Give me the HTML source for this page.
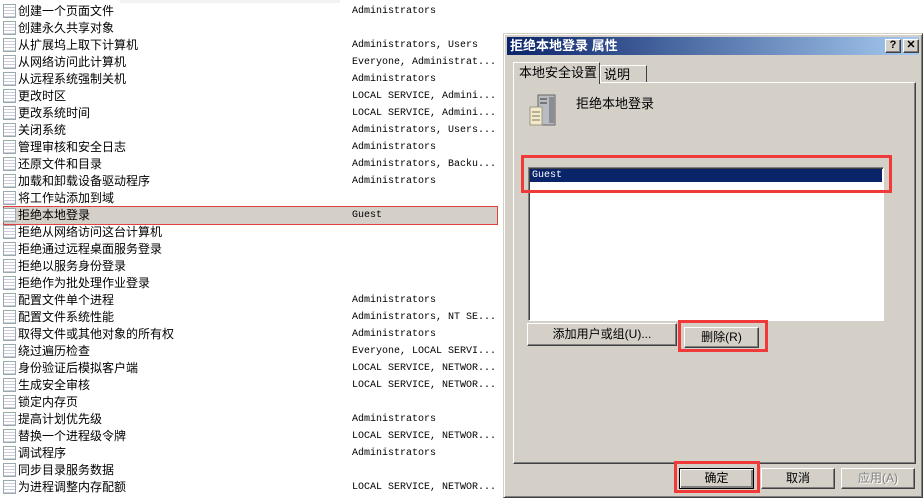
<!DOCTYPE html><html><head><meta charset="utf-8"><style>
*{margin:0;padding:0;box-sizing:border-box}
body{width:923px;height:498px;overflow:hidden;background:#fff;position:relative;font-family:"Liberation Sans","Noto Sans CJK SC",sans-serif;font-size:12px;color:#000}
.r{position:absolute;left:0;width:500px;height:17px;line-height:17px}
.r .i{position:absolute;left:3px;top:1px;width:13px;height:14px;border:1px solid #9aa;background:repeating-linear-gradient(#fff 0 2px,#ccd 2px 3px)}
.r .n{position:absolute;left:18px;top:0;white-space:nowrap}
.r .v{position:absolute;left:352px;top:0;font-family:"Liberation Mono",monospace;font-size:10px;white-space:nowrap}
.abs{position:absolute}
.btn{position:absolute;background:#d4d0c8;border:1px solid;border-color:#fff #404040 #404040 #fff;box-shadow:inset -1px -1px #808080;text-align:center;font-size:12px}
.red{position:absolute;border:3px solid #f03a3a}
</style></head><body>
<div class="abs" style="left:120px;top:0;width:220px;height:3px;background:#f2f2f2"></div>
<div id="list"></div>
<div class="abs" style="left:3px;top:206px;width:495px;height:19px;background:#d4d0c8;border:1px solid #e04040"></div>
<script>
var d=[["创建一个页面文件","Administrators"],["创建永久共享对象",""],["从扩展坞上取下计算机","Administrators, Users"],["从网络访问此计算机","Everyone, Administrat..."],["从远程系统强制关机","Administrators"],["更改时区","LOCAL SERVICE, Admini..."],["更改系统时间","LOCAL SERVICE, Admini..."],["关闭系统","Administrators, Users..."],["管理审核和安全日志","Administrators"],["还原文件和目录","Administrators, Backu..."],["加载和卸载设备驱动程序","Administrators"],["将工作站添加到域",""],["拒绝本地登录","Guest"],["拒绝从网络访问这台计算机",""],["拒绝通过远程桌面服务登录",""],["拒绝以服务身份登录",""],["拒绝作为批处理作业登录",""],["配置文件单个进程","Administrators"],["配置文件系统性能","Administrators, NT SE..."],["取得文件或其他对象的所有权","Administrators"],["绕过遍历检查","Everyone, LOCAL SERVI..."],["身份验证后模拟客户端","LOCAL SERVICE, NETWOR..."],["生成安全审核","LOCAL SERVICE, NETWOR..."],["锁定内存页",""],["提高计划优先级","Administrators"],["替换一个进程级令牌","LOCAL SERVICE, NETWOR..."],["调试程序","Administrators"],["同步目录服务数据",""],["为进程调整内存配额","LOCAL SERVICE, NETWOR..."]];
var h="";d.forEach(function(e,i){h+='<div class="r" style="top:'+(3+17*i)+'px;z-index:2"><span class="i"></span><span class="n">'+e[0]+'</span><span class="v">'+e[1]+'</span></div>'});
document.getElementById("list").innerHTML=h;
</script>
<div class="abs" style="left:503px;top:33px;width:420px;height:465px;background:#d4d0c8;border:1px solid;border-color:#d4d0c8 #404040 #404040 #d4d0c8;box-shadow:inset 1px 1px #fff,inset -1px -1px #808080;z-index:3">
<div class="abs" style="left:3px;top:3px;width:412px;height:18px;background:linear-gradient(90deg,#0a246a,#a6caf0);color:#fff;font-weight:bold;font-size:13px;line-height:18px;padding-left:3px">拒绝本地登录 属性</div>
<div class="btn" style="left:381px;top:5px;width:16px;height:14px;font-weight:bold;font-size:11px;line-height:11px">?</div>
<div class="btn" style="left:399px;top:5px;width:16px;height:14px;font-weight:bold;font-size:11px;line-height:11px">✕</div>
<div class="abs" style="left:9px;top:48px;width:403px;height:382px;border:1px solid;border-color:#fff #404040 #404040 #fff;box-shadow:inset -1px -1px #808080"></div>
<div class="abs" style="left:9px;top:28px;width:87px;height:22px;background:#d4d0c8;border:1px solid;border-color:#fff #404040 #d4d0c8 #fff;border-bottom:none;line-height:20px;padding-left:5px;font-size:13px">本地安全设置</div>
<div class="abs" style="left:96px;top:31px;width:47px;height:17px;border:1px solid;border-color:#fff #404040 #fff #fff;border-bottom:none;line-height:17px;padding-left:3px;font-size:13px">说明</div>
<svg class="abs" style="left:24px;top:59px" width="32" height="34"><rect x="10" y="2" width="17" height="30" fill="#b8bcc0" stroke="#666"/><rect x="12" y="5" width="7" height="2" fill="#777"/><rect x="12" y="9" width="7" height="2" fill="#777"/><rect x="21" y="4" width="5" height="26" fill="#8a8e92"/><rect x="2" y="14" width="12" height="18" fill="#f4e9c8" stroke="#998"/><line x1="4" y1="19" x2="12" y2="19" stroke="#776"/><line x1="4" y1="23" x2="12" y2="23" stroke="#776"/><line x1="4" y1="27" x2="12" y2="27" stroke="#776"/></svg>
<div class="abs" style="left:72px;top:59px;font-size:13px">拒绝本地登录</div>
<div class="abs" style="left:24px;top:133px;width:356px;height:154px;background:#fff;border:1px solid;border-color:#808080 #fff #fff #808080;box-shadow:inset 1px 1px #404040"></div>
<div class="abs" style="left:26px;top:135px;width:352px;height:13px;background:#0a246a;color:#fff;font-family:'Liberation Mono',monospace;font-size:10px;line-height:13px;padding-left:2px">Guest</div>
<div class="btn" style="left:23px;top:289px;width:150px;height:23px;line-height:21px">添加用户或组(U)...</div>
<div class="btn" style="left:180px;top:293px;width:75px;height:21px;line-height:19px">删除(R)</div>
<div class="btn" style="left:175px;top:434px;width:75px;height:21px;line-height:19px;border-color:#000;box-shadow:inset 1px 1px #fff,inset -2px -2px #808080">确定</div>
<div class="btn" style="left:257px;top:434px;width:74px;height:21px;line-height:19px">取消</div>
<div class="btn" style="left:337px;top:434px;width:74px;height:21px;line-height:19px;color:#808080;text-shadow:1px 1px #fff">应用(A)</div>
</div>
<div class="red" style="left:521px;top:155px;width:371px;height:38px;z-index:5"></div>
<div class="red" style="left:678px;top:320px;width:90px;height:32px;z-index:5"></div>
<div class="red" style="left:674px;top:461px;width:86px;height:32px;z-index:5"></div>
</body></html>
